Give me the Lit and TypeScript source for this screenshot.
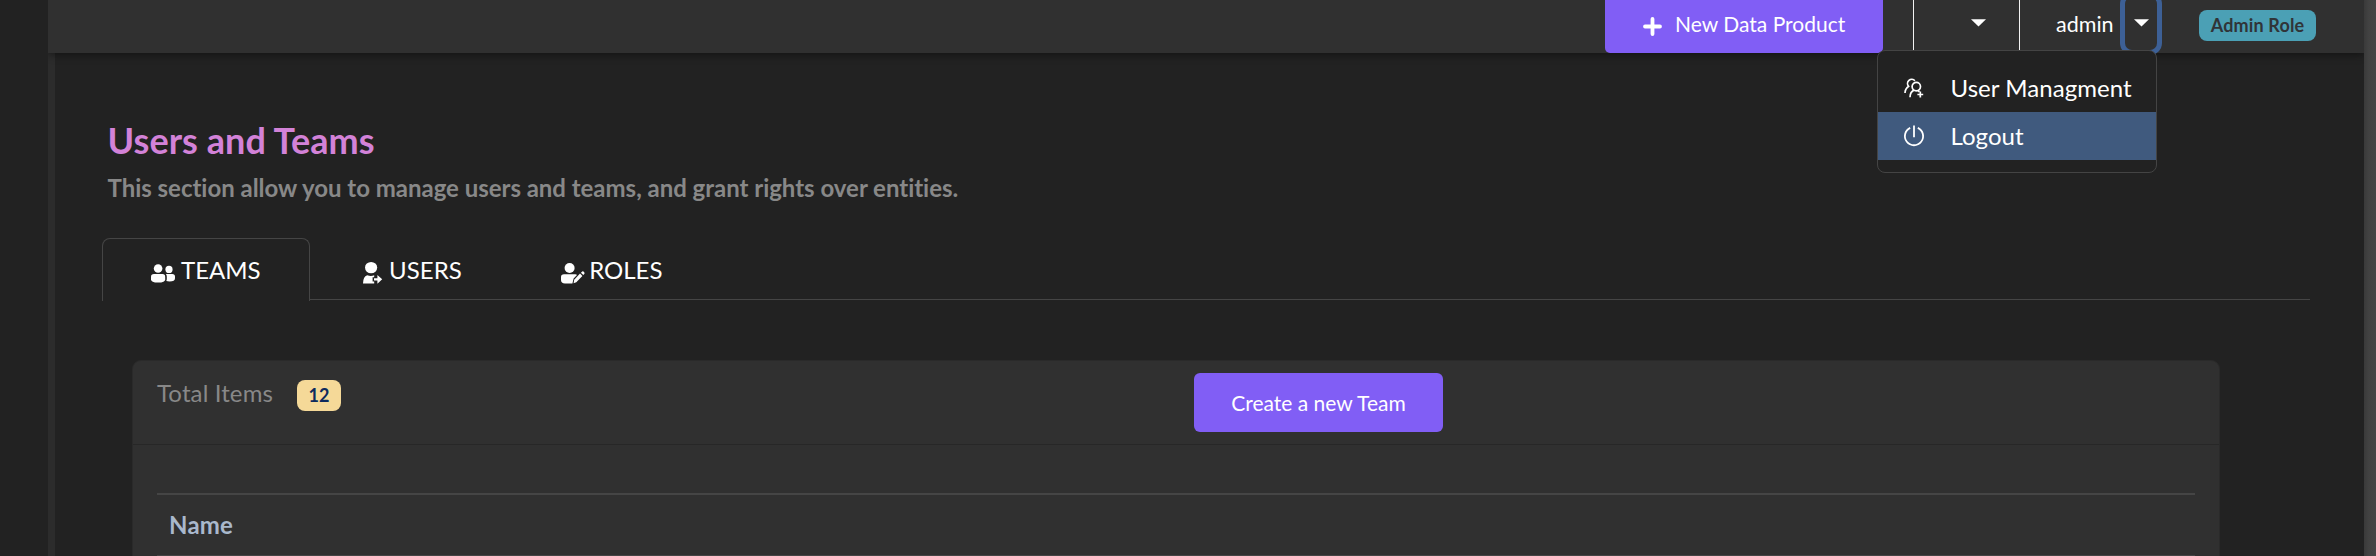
import { LitElement, html, css, svg } from "lit";
import { customElement, property } from "lit/decorators.js";

const ICONS: Record<string, { w: number; h: number; body: unknown }> = {
  plus: {
    w: 19, h: 19,
    body: svg`<path d="M9.5 2V17M2 9.5H17" fill="none" stroke="currentColor" stroke-width="3.8" stroke-linecap="round"/>`,
  },
  caret: { w: 15, h: 8, body: svg`<path d="M0 0.3H15L7.5 7.6Z"/>` },
  people: {
    w: 20, h: 22,
    body: svg`<g fill="none" stroke="currentColor" stroke-width="1.7">
      <circle cx="12.3" cy="9.6" r="4.2"/>
      <path d="M10.9 3.7A4.2 4.2 0 1 0 4.6 9.3Q1.2 11.7 1 16"/>
      <path d="M6 20.2Q6.2 14.6 10 13.1"/>
      <path d="M13.9 13.4L15.4 15"/>
      <path d="M16.3 14.6V20.4M13.4 17.5H19.2"/></g>`,
  },
  power: {
    w: 20, h: 22,
    body: svg`<g fill="none" stroke="currentColor" stroke-width="1.8">
      <path d="M6.2 2.9A9.1 9.1 0 1 0 13.8 2.9"/><path d="M10 0.5V12.2"/></g>`,
  },
  teams: {
    w: 24, h: 22,
    body: svg`<circle cx="7.1" cy="6.5" r="4.3"/><circle cx="18" cy="7.4" r="3.6"/>
      <path d="M3 12H11.5Q14.2 12 14.2 14.8V17.5Q14.2 20.6 7.1 20.6T0 17.5V14.8Q0 12 3 12Z"/>
      <path d="M14.9 12H21.2Q24 12 24 14.6V16.2Q24 19.4 18.5 19.4Q16.7 19.4 15.3 19Q15.8 18 15.8 16.8V14.8Q15.8 13 14.9 12Z"/>`,
  },
  users: {
    w: 24, h: 22,
    body: svg`<ellipse cx="12.1" cy="5.6" rx="6.1" ry="5.7"/>
      <path d="M8.2 13.2Q12 14.8 15.2 13.2V15.2H13.6V19.4H15.2V21.6H4Q4 14.6 8.2 13.2Z"/>
      <path d="M15 16.2H18.4V13L23.2 17.3L18.4 21.8V18.6H15Z"/>`,
  },
  roles: {
    w: 26, h: 22,
    body: svg`<circle cx="10.6" cy="6" r="5"/>
      <path d="M5 12.2H16.2Q17.6 12.2 18 13L14.6 16.6L13.4 21.4H6Q2 21.4 2 18V15Q2 12.2 5 12.2Z"/>
      <path d="M21 11.6L23.4 14L17.3 20.2L14.6 21.2L15.2 17.7Z"/>
      <path d="M21.9 10.7L23.2 9.5Q24.1 9 25 9.9T25.4 11.8L24.3 13.1Z"/>`,
  },
};

@customElement("ui-icon")
export class UiIcon extends LitElement {
  static styles = css`
    :host { display: flex; flex: none; }
    .glyph { display: block; fill: currentColor; overflow: visible; }
  `;
  @property() name = "plus";
  render() {
    const i = ICONS[this.name];
    return html`<svg class="glyph" width=${i.w} height=${i.h} viewBox="0 0 ${i.w} ${i.h}">${i.body}</svg>`;
  }
}

const TABS = [
  { label: "TEAMS", icon: "teams", active: true },
  { label: "USERS", icon: "users", active: false },
  { label: "ROLES", icon: "roles", active: false },
];

const MENU = [
  { label: "User Managment", icon: "people", active: false },
  { label: "Logout", icon: "power", active: true },
];

@customElement("app-root")
export class AppRoot extends LitElement {
  static styles = css`
    :host {
      display: block; height: 556px; overflow: hidden; background: #222; color: #fff;
      font-family: Lato, sans-serif; font-size: 24px; line-height: 30px;
      font-variant-ligatures: none; white-space: nowrap;
    }
    * { box-sizing: border-box; }
    .shell { display: grid; grid-template-columns: 48px 1fr 12px; height: 100%; }
    .scroll { background: linear-gradient(90deg, #3a3a3a, #424242 40%, #454545); }
    .main { display: flex; flex-direction: column; min-width: 0; }

    .bar {
      display: flex; justify-content: flex-end; height: 53px; padding-right: 48px;
      background: #303030; box-shadow: 0 2px 8px rgba(0, 0, 0, 0.45); position: relative; z-index: 1;
      clip-path: inset(0 0 -140px 0);
    }
    .new {
      display: flex; align-items: flex-start; gap: 13px; width: 278px; height: 53px; padding: 9px 0 0 38px;
      background: #815ef5; border-radius: 0 0 5px 5px; font-size: 21px; letter-spacing: 0.02px;
    }
    .new ui-icon { margin-top: 8px; }
    .picker {
      width: 107px; height: 50px; margin-left: 30px; padding: 19px 0 0 57px;
      border-left: 1px solid #f2f2f2; border-right: 1px solid #f2f2f2;
    }
    .account { position: relative; display: flex; margin-left: 36px; }
    .who { width: 69px; padding-top: 9px; font-size: 21.5px; }
    .toggle {
      width: 32px; height: 53px; margin-top: -3px; padding: 22px 0 0 9px;
      border-radius: 7px; box-shadow: 0 0 0 5px #3d6096;
    }
    .menu {
      position: absolute; top: 50px; right: 0; width: 280px; height: 123px; padding: 13px 0 12px;
      background: #222; border: 1px solid #444; border-radius: 8px;
    }
    .item { display: flex; align-items: center; gap: 26.5px; height: 48px; padding-left: 26px; letter-spacing: 0.05px; }
    .item.active { background: #405a7e; }
    .role {
      height: 31px; width: 117px; margin: 10px 0 0 42px; border-radius: 8px; background: #4ba0b5;
      color: #303438; font-size: 18px; font-weight: 700; text-align: center; letter-spacing: 0.15px; line-height: 31px;
    }

    .page { flex: 1; border-left: 7px solid #2c2c2c; padding: 66px 54px 0 47px; }
    .head { padding-left: 5.5px; }
    .title { margin: 0; font-size: 36px; line-height: 42px; color: #d382d8; letter-spacing: 0.05px; }
    .sub { margin: 12px 0 0; font-size: 24px; line-height: 30px; color: #888; letter-spacing: -0.025px; }

    .tabs { display: flex; align-items: flex-start; height: 63px; margin-top: 35px; }
    .tab { display: flex; gap: 6.5px; height: 62px; padding: 17px 48px 0 49px; border-bottom: 1px solid #454545; }
    .tab.active {
      height: 63px; padding: 16px 48px 0; border: 1px solid #454545; border-bottom: none;
      border-radius: 8px 8px 0 0; gap: 6px;
    }
    .tab ui-icon { width: 24px; margin-top: 7px; }
    .rest { flex: 1; height: 62px; border-bottom: 1px solid #454545; }

    .card {
      width: 2088px; height: 240px; margin: 59px 0 0 30px; border: 1px solid #2a2a2a;
      border-radius: 9px; background: #303030;
    }
    .top { display: grid; grid-template-columns: 1fr 1fr; height: 84px; padding: 12px 24px 0; border-bottom: 1px solid #272727; }
    .count { display: flex; color: #888; letter-spacing: 0.12px; }
    .label { width: 140px; padding-top: 5px; }
    .badge {
      width: 44px; height: 31px; margin-top: 7px; border-radius: 8px; background: #f5d998; color: #0d2a5e;
      font-size: 18px; font-weight: 700; line-height: 30px; text-align: center;
    }
    .create {
      display: grid; place-items: center; width: 249px; height: 59px; margin-left: 18px; border-radius: 6px;
      background: #815ef5; font-size: 21px;
    }
    .table { margin: 48px 24px 0; border-top: 2px solid #454545; }
    .th {
      height: 61px; padding: 15px 12px 0; border-bottom: 1px solid #454545; color: #a9b8cc; font-weight: 700;
      letter-spacing: 0.2px;
    }
  `;

  render() {
    return html`
      <div class="shell">
        <div></div>
        <div class="main">
          <div class="bar">
            <div class="new"><ui-icon name="plus"></ui-icon><span>New Data Product</span></div>
            <div class="picker"><ui-icon name="caret"></ui-icon></div>
            <div class="account">
              <div class="who">admin</div>
              <div class="toggle"><ui-icon name="caret"></ui-icon></div>
              <div class="menu">
                ${MENU.map((m) => html`<div class="item ${m.active ? "active" : ""}"><ui-icon name=${m.icon}></ui-icon><span>${m.label}</span></div>`)}
              </div>
            </div>
            <div class="role">Admin Role</div>
          </div>
          <div class="page">
            <div class="head">
              <h1 class="title">Users and Teams</h1>
              <h2 class="sub">This section allow you to manage users and teams, and grant rights over entities.</h2>
            </div>
            <div class="tabs">
              ${TABS.map((t) => html`<div class="tab ${t.active ? "active" : ""}"><ui-icon name=${t.icon}></ui-icon><span>${t.label}</span></div>`)}
              <div class="rest"></div>
            </div>
            <div class="card">
              <div class="top">
                <div class="count"><span class="label">Total Items</span><span class="badge">12</span></div>
                <div class="create">Create a new Team</div>
              </div>
              <div class="table"><div class="th">Name</div></div>
            </div>
          </div>
        </div>
        <div class="scroll"></div>
      </div>
    `;
  }
}
